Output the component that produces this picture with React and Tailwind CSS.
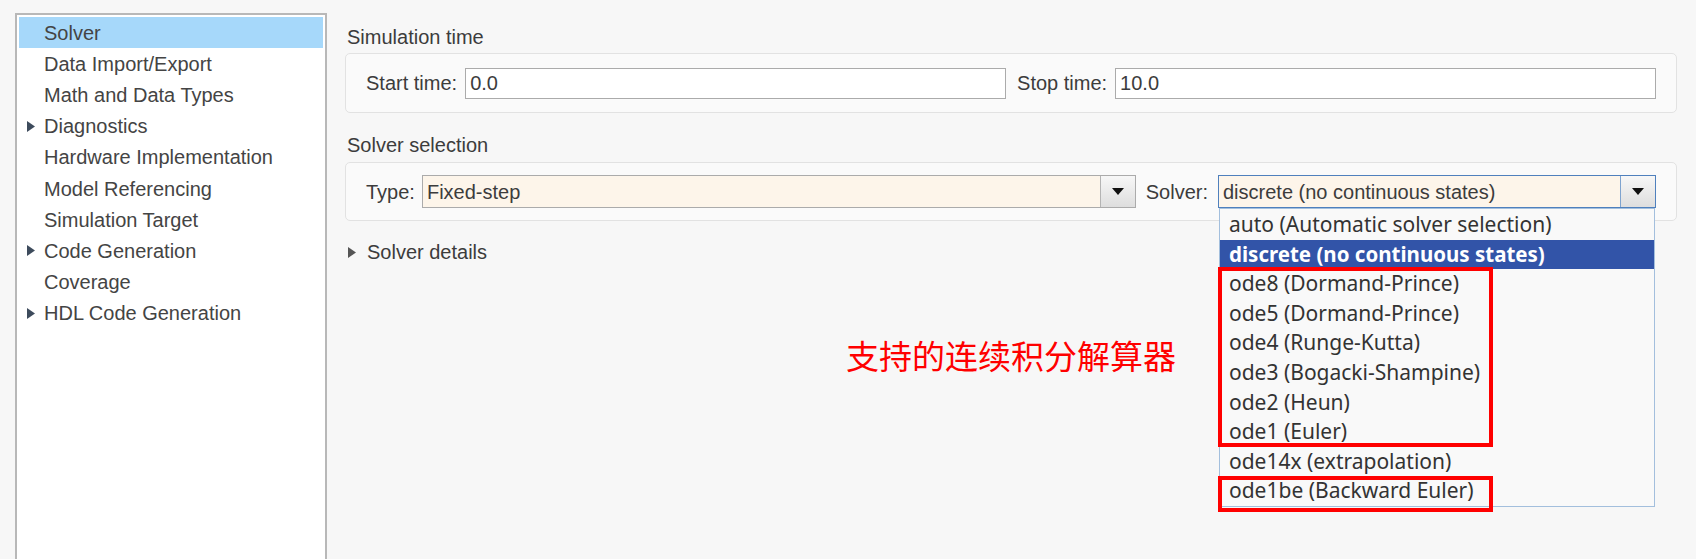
import React from "react";

const navItems = [
    { label: "Solver", selected: true },
    { label: "Data Import/Export" },
    { label: "Math and Data Types" },
    { label: "Diagnostics", expandable: true },
    { label: "Hardware Implementation" },
    { label: "Model Referencing" },
    { label: "Simulation Target" },
    { label: "Code Generation", expandable: true },
    { label: "Coverage" },
    { label: "HDL Code Generation", expandable: true },
];

const solverOptions = [
    "auto (Automatic solver selection)",
    "discrete (no continuous states)",
    "ode8 (Dormand-Prince)",
    "ode5 (Dormand-Prince)",
    "ode4 (Runge-Kutta)",
    "ode3 (Bogacki-Shampine)",
    "ode2 (Heun)",
    "ode1 (Euler)",
    "ode14x (extrapolation)",
    "ode1be (Backward Euler)",
];

function Caret({ className }) {
    return (
        <svg className={className} viewBox="0 0 8 11" fill="currentColor">
            <path d="M0 0 L8 5.5 L0 11 Z" />
        </svg>
    );
}

function ArrowButton({ focused }) {
    return (
        <div
            className={`w-[35px] h-full flex items-center justify-center bg-gradient-to-b from-[#f7f7f7] to-[#dedede] border-l ${
                focused ? "border-[#7ea3cf]" : "border-[#b4b4b4]"
            }`}
        >
            <svg className="w-[12px] h-[7px]" viewBox="0 0 12 7" fill="#111">
                <path d="M0 0 H12 L6 7 Z" />
            </svg>
        </div>
    );
}

function App() {
    return (
        <div className="relative w-[1696px] h-[559px] overflow-hidden bg-[#f7f7f7] flex font-['Liberation_Sans',Arial,sans-serif]">
            {/* tree */}
            <div className="ml-[15px] mt-[13px] w-[312px] h-[560px] shrink-0 bg-white border-2 border-[#b8b8b8] pt-[2px] px-[2px]">
                {navItems.map((item) => (
                    <div
                        key={item.label}
                        className={`relative h-[31.2px] flex items-center pl-[25px] text-[20px] text-[#444] ${
                            item.selected ? "bg-[#a6d8fa]" : ""
                        }`}
                    >
                        {item.expandable && (
                            <Caret className="absolute left-[8px] top-[10px] w-[8px] h-[11px] text-[#3d4b5c]" />
                        )}
                        {item.label}
                    </div>
                ))}
            </div>

            {/* settings */}
            <div className="flex-1 ml-[18px] mr-[19px] pt-[23px] text-[20px] text-[#3c3c3c]">
                <div className="h-[28px] flex items-center pl-[2px]">Simulation time</div>
                <div className="mt-[2px] h-[60px] flex items-center gap-[8px] px-[20px] border border-[#e2e2e2] rounded-[5px] bg-[#fafafa]">
                    <span>Start time:</span>
                    <div className="flex-1 h-[31px] flex items-center px-[4px] bg-white border border-[#ababab]">0.0</div>
                    <span className="ml-[3px]">Stop time:</span>
                    <div className="flex-1 h-[31px] flex items-center px-[4px] bg-white border border-[#ababab]">10.0</div>
                </div>

                <div className="mt-[18px] h-[28px] flex items-center pl-[2px]">Solver selection</div>
                <div className="mt-[3px] h-[59px] flex items-center px-[20px] border border-[#e2e2e2] rounded-[5px] bg-[#fafafa]">
                    <span>Type:</span>
                    <div className="ml-[7px] flex-1 h-[33px] flex items-center bg-[#fdf5ea] border border-[#ababab]">
                        <span className="flex-1 pl-[4px]">Fixed-step</span>
                        <ArrowButton />
                    </div>
                    <span className="ml-[10px]">Solver:</span>
                    <div className="relative ml-[10px] w-[438px] h-[33px]">
                        <div className="h-full flex items-center bg-[#fdf5ea] border border-[#4f80bd]">
                            <span className="flex-1 pl-[4px]">discrete (no continuous states)</span>
                            <ArrowButton focused />
                        </div>

                        {/* open dropdown */}
                        <div className="absolute z-10 top-full left-[1px] right-[1px] border border-[#a3bfdd] bg-[#f9f9f9] pt-[1px] font-['Noto_Sans','Open_Sans',sans-serif] text-[21px] text-[#333]">
                            {solverOptions.map((opt, i) => (
                                <div
                                    key={opt}
                                    className={`h-[29.6px] flex items-center pl-[9px] whitespace-nowrap ${
                                        i === 1 ? "bg-[#3254a8] text-white font-bold text-[20.5px]" : ""
                                    }`}
                                >
                                    {opt}
                                </div>
                            ))}
                            <div className="absolute left-[-2px] top-[58px] w-[275px] h-[180px] border-[4px] border-[#f00]"></div>
                            <div className="absolute left-[-2px] top-[267px] w-[275px] h-[36px] border-[4px] border-[#f00]"></div>
                        </div>
                    </div>
                </div>

                <div className="mt-[17px] h-[28px] flex items-center">
                    <Caret className="ml-[3px] w-[8px] h-[11px] text-[#555]" />
                    <span className="ml-[11px]">Solver details</span>
                </div>
            </div>

            {/* annotation */}
            <div className="absolute left-[846px] top-[339px] text-[33px] leading-none text-[#f00] font-['Noto_Sans_CJK_SC',sans-serif]">
                支持的连续积分解算器
            </div>
        </div>
    );
}

export default App;
